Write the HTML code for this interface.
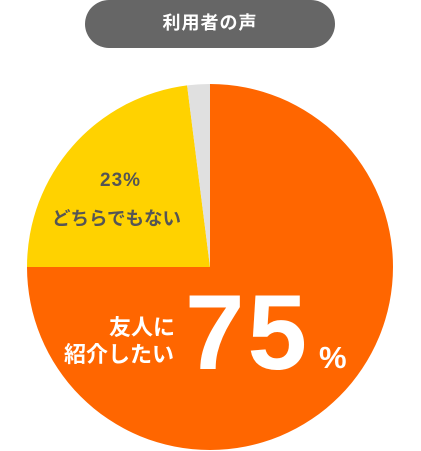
<!DOCTYPE html>
<html><head><meta charset="utf-8"><style>
html,body{margin:0;padding:0;background:#fff;width:421px;height:451px;overflow:hidden;position:relative;font-family:"Liberation Sans","Noto Sans CJK JP",sans-serif;font-weight:bold}
.pill{position:absolute;left:85px;top:0;width:250px;height:48px;border-radius:24px;background:#666;color:#fff;font-size:18px;line-height:46px;text-align:center;letter-spacing:1px}
.t{position:absolute;white-space:nowrap}
</style></head><body>
<div class="pill">利用者の声</div>
<svg width="421" height="451" style="position:absolute;left:0;top:0">
<path d="M210 267 L210 84 A183 183 0 1 1 27 267 Z" fill="#FF6600"/>
<path d="M210 267 L27 267 A183 183 0 0 1 187.1 85.4 Z" fill="#FFD200"/>
<path d="M210 267 L187.1 85.4 A183 183 0 0 1 210 84 Z" fill="#E0E0E0"/>
</svg>
<div class="t" style="left:100px;top:170px;font-size:19px;color:#555;letter-spacing:1px">23%</div>
<div class="t" style="left:52px;top:205px;font-size:18.5px;color:#555">どちらでもない</div>
<div class="t" style="left:109px;top:310px;font-size:22px;color:#fff">友人に</div>
<div class="t" style="left:64px;top:337px;font-size:22px;color:#fff">紹介したい</div>
<div class="t" style="left:185px;top:270px;font-size:107px;line-height:124px;color:#fff;letter-spacing:3px">75</div>
<div class="t" style="left:319px;top:338px;font-size:31px;line-height:40px;color:#fff">%</div>
</body></html>
